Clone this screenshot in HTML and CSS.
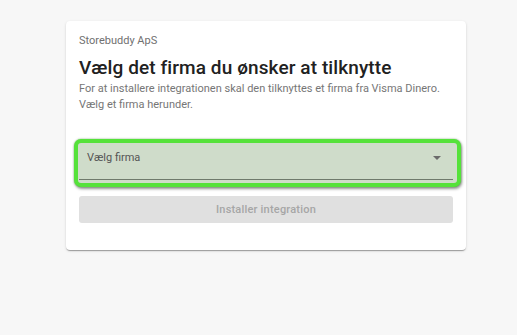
FILE: index.html
```html
<!DOCTYPE html>
<html lang="da">
<head>
<meta charset="utf-8">
<link rel="stylesheet" href="styles.css">
</head>
<body>
<div class="card">
  <div class="company">Storebuddy ApS</div>
  <h1 class="title">Vælg det firma du ønsker at tilknytte</h1>
  <p class="desc">For at installere integrationen skal den tilknyttes et firma fra Visma Dinero. Vælg et firma herunder.</p>
  <div class="select-wrap">
    <div class="select">
      <span class="select-label">Vælg firma</span>
      <svg class="arrow" width="8" height="4" viewBox="0 0 8 4"><path d="M0 0 L8 0 L4 4 Z" fill="#6b6b6b"/></svg>
    </div>
  </div>
  <button class="btn" disabled>Installer integration</button>
</div>
</body>
</html>
```
FILE: styles.css
```css
html, body { margin: 0; padding: 0; }
body {
  background: #f7f7f7;
  font-family: Roboto, "Noto Sans", sans-serif;
  width: 517px;
  height: 335px;
  overflow: hidden;
  padding-top: 21px;
  box-sizing: border-box;
}
.card {
  margin-left: 66px;
  width: 400px;
  box-sizing: border-box;
  background: #fff;
  border-radius: 4px;
  box-shadow: 0 2px 1px -1px rgba(0,0,0,0.2), 0 1px 1px 0 rgba(0,0,0,0.14), 0 1px 3px 0 rgba(0,0,0,0.12);
  padding: 13px 13px 27px 13px;
  height: 229px;
}
.company {
  font-size: 11px;
  color: #707070;
  line-height: 14px;
}
.title {
  margin: 9px 0 0 0;
  font-size: 19px;
  font-weight: 500;
  color: #212121;
  line-height: 22px;
  letter-spacing: 0.1px;
}
.desc {
  margin: 2px 0 0 0;
  font-size: 11px;
  color: #767676;
  line-height: 16px;
}
.select-wrap {
  margin-top: 26px;
  margin-left: -5px;
  margin-right: -8px;
  height: 48px;
  padding: 0 4px 3px 1px;
  border-radius: 7px;
  border: 4px solid #55e23a;
  background: #cfdcca;
  box-shadow: 0 0 2px rgba(40,120,20,0.6), 1px 2px 3px rgba(0,0,0,0.4);
  box-sizing: border-box;
}
.select {
  height: 37px;
  border-bottom: 1px solid #6f7a6c;
  display: flex;
  align-items: center;
  justify-content: space-between;
  padding: 0 12px 7px 8px;
  box-sizing: border-box;
}
.select-label {
  font-size: 11px;
  color: #555;
}
.arrow { display: block; }
.btn {
  display: block;
  margin-top: 9px;
  width: 100%;
  height: 27px;
  border: none;
  border-radius: 3px;
  background: #e0e0e0;
  color: #a6a6a6;
  font-family: Roboto, "Noto Sans", sans-serif;
  font-size: 11px;
  font-weight: 500;
  letter-spacing: 0.2px;
  padding: 0;
}
```
